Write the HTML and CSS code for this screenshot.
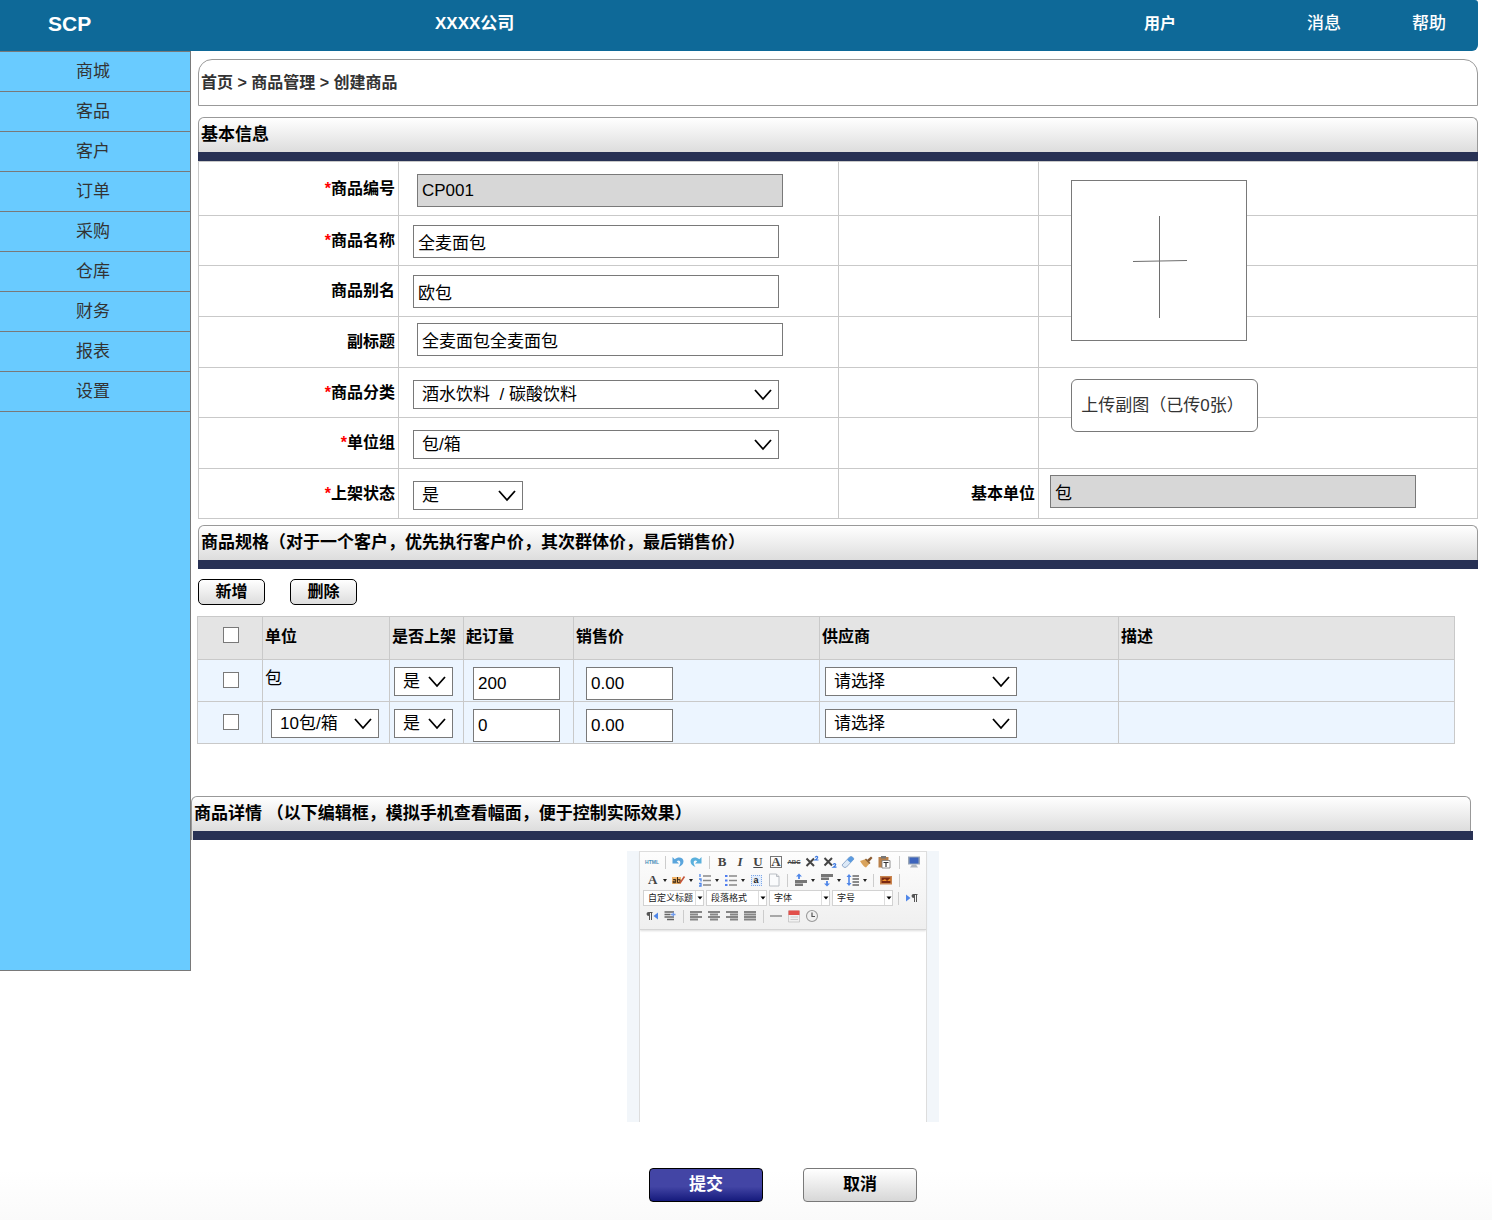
FILE: index.html
```html
<!DOCTYPE html>
<html lang="zh-CN">
<head>
<meta charset="utf-8">
<meta name="viewport" content="width=device-width, initial-scale=1">
<title>创建商品</title>
<link rel="stylesheet" href="styles.css">
</head>
<body>
<header class="topbar">
  <span class="brand">SCP</span>
  <span class="company">XXXX公司</span>
  <nav class="topnav">
    <a class="topnav-user" href="#">用户</a>
    <a class="topnav-messages" href="#">消息</a>
    <a href="#">帮助</a>
  </nav>
</header>

<div class="layout">
  <nav class="sidebar">
    <a href="#">商城</a>
    <a href="#">客品</a>
    <a href="#">客户</a>
    <a href="#">订单</a>
    <a href="#">采购</a>
    <a href="#">仓库</a>
    <a href="#">财务</a>
    <a href="#">报表</a>
    <a href="#">设置</a>
  </nav>

  <main class="content">
    <div class="breadcrumb">首页 &gt; 商品管理 &gt; 创建商品</div>

    <section class="panel">
      <h2 class="panel-title">基本信息</h2>
      <div class="basic">
        <table class="form-table">
          <colgroup><col class="col-label"><col class="col-field"><col class="col-label"><col></colgroup>
          <tbody>
            <tr>
              <th><label for="code"><i>*</i>商品编号</label></th>
              <td class="roomy indent"><input class="text" id="code" value="CP001" readonly></td>
              <th></th><td></td>
            </tr>
            <tr>
              <th><label for="name"><i>*</i>商品名称</label></th>
              <td><input class="text" id="name" value="全麦面包"></td>
              <th></th><td></td>
            </tr>
            <tr>
              <th><label for="alias">商品别名</label></th>
              <td><input class="text" id="alias" value="欧包"></td>
              <th></th><td></td>
            </tr>
            <tr>
              <th><label for="subtitle">副标题</label></th>
              <td class="snug indent"><input class="text" id="subtitle" value="全麦面包全麦面包"></td>
              <th></th><td></td>
            </tr>
            <tr>
              <th><label for="category"><i>*</i>商品分类</label></th>
              <td class="roomy"><select class="pick" id="category"><option>酒水饮料&nbsp; / 碳酸饮料</option></select></td>
              <th></th><td></td>
            </tr>
            <tr>
              <th><label for="unit-group"><i>*</i>单位组</label></th>
              <td class="roomy"><select class="pick" id="unit-group"><option>包/箱</option></select></td>
              <th></th><td></td>
            </tr>
            <tr>
              <th><label for="status"><i>*</i>上架状态</label></th>
              <td class="roomy"><select class="pick pick-short" id="status"><option>是</option></select></td>
              <th><label for="base-unit">基本单位</label></th>
              <td class="snug outdent"><input class="text" id="base-unit" value="包" readonly></td>
            </tr>
          </tbody>
        </table>
        <div class="uploads">
          <button class="photo" type="button" aria-label="上传主图">
            <svg width="54" height="102" viewBox="0 0 54 102"><path d="M26.500 0V102M0 45.500L54 44.500" stroke="#6e6e6e" fill="none"/></svg>
          </button>
          <button class="more-photos" type="button">上传副图（已传0张）</button>
        </div>
      </div>
    </section>

    <section class="panel specs">
      <h2 class="panel-title">商品规格（对于一个客户，优先执行客户价，其次群体价，最后销售价）</h2>
      <div class="actions">
        <button class="btn-small" type="button">新增</button>
        <button class="btn-small" type="button">删除</button>
      </div>
      <table class="spec-table">
        <colgroup><col class="w-check"><col class="w-unit"><col class="w-on"><col class="w-min"><col class="w-price"><col class="w-supplier"><col></colgroup>
        <thead>
          <tr>
            <th class="tick"><input type="checkbox" aria-label="全选"></th>
            <th>单位</th><th>是否上架</th><th>起订量</th><th>销售价</th><th>供应商</th><th>描述</th>
          </tr>
        </thead>
        <tbody>
          <tr>
            <td class="tick"><input type="checkbox" aria-label="选择包"></td>
            <td class="plain">包</td>
            <td class="on"><select class="pick" aria-label="是否上架"><option>是</option></select></td>
            <td class="min"><input class="text" aria-label="起订量" value="200"></td>
            <td class="price"><input class="text" aria-label="销售价" value="0.00"></td>
            <td class="supplier"><select class="pick" aria-label="供应商"><option>请选择</option></select></td>
            <td></td>
          </tr>
          <tr>
            <td class="tick"><input type="checkbox" aria-label="选择10包/箱"></td>
            <td class="unit"><select class="pick" aria-label="单位"><option>10包/箱</option></select></td>
            <td class="on"><select class="pick" aria-label="是否上架"><option>是</option></select></td>
            <td class="min"><input class="text" aria-label="起订量" value="0"></td>
            <td class="price"><input class="text" aria-label="销售价" value="0.00"></td>
            <td class="supplier"><select class="pick" aria-label="供应商"><option>请选择</option></select></td>
            <td></td>
          </tr>
        </tbody>
      </table>
    </section>

    <section class="details">
      <h2 class="panel-title">商品详情 （以下编辑框，模拟手机查看幅面，便于控制实际效果）</h2>
      <div class="centered">
        <div class="editor">
          <div class="editor-body">
            <div class="toolbar">
              <div class="tools">
                <button type="button" class="t-html">HTML</button><span class="sep"></span>
                <button type="button" aria-label="撤销"><svg viewBox="0 0 14 14"><path d="M1.500 2V8.500H8L5.700 6.200C7.500 4.800 9.300 5.500 9.300 7.500C9.300 9 8.500 10.500 7.500 12C10.500 11 12.500 9 12.500 6.300C12.500 2.500 7.500 1 3.700 4.200Z" fill="#5aa5dc"/></svg></button>
                <button type="button" aria-label="重做"><svg viewBox="0 0 14 14"><path d="M12.500 2V8.500H6L8.300 6.200C6.500 4.800 4.700 5.500 4.700 7.500C4.700 9 5.500 10.500 6.500 12C3.500 11 1.500 9 1.500 6.300C1.500 2.500 6.500 1 10.300 4.200Z" fill="#5ab0dc"/></svg></button><span class="sep"></span>
                <button type="button" class="t-serif">B</button>
                <button type="button" class="t-serif t-italic">I</button>
                <button type="button" class="t-serif t-under">U</button>
                <button type="button" class="t-serif"><span class="t-box">A</span></button>
                <button type="button" class="t-abc">ABC</button>
                <button type="button" aria-label="上标"><svg viewBox="0 0 14 14"><path d="M1.500 3.500L9 11M9 3.500L1.500 11" stroke="#444" stroke-width="2"/><path d="M10 2.500Q11.500 .5 12.700 2.200Q12.700 3.300 10.300 5H13.500" stroke="#3b78e0" stroke-width="1.200" fill="none"/></svg></button>
                <button type="button" aria-label="下标"><svg viewBox="0 0 14 14"><path d="M1.500 3L9 10.500M9 3L1.500 10.500" stroke="#444" stroke-width="2"/><path d="M10 9.700Q11.500 7.700 12.700 9.400Q12.700 10.500 10.300 12.200H13.500" stroke="#3b78e0" stroke-width="1.200" fill="none"/></svg></button>
                <button type="button" aria-label="清除格式"><svg viewBox="0 0 14 14"><path d="M1 10L8.500 2Q10 1 11.500 2L13 4L5.500 12Q4 13 2.500 12Z" fill="#dce9f7" stroke="#7d9bc0" stroke-width=".8"/><path d="M6 4.700L8.700 2Q10 1 11.500 2L13 4L9.500 7.700Z" fill="#5b9be0"/></svg></button>
                <button type="button" aria-label="格式刷"><svg viewBox="0 0 14 14"><path d="M8 5L12 1.500L13.500 3L10 7Z" fill="#8a5a30"/><path d="M1 6L7 4L11 8L7 12.500Q5 12.500 1 6Z" fill="#d9a35c"/><path d="M6.500 4L11 8.500" stroke="#8b6238" stroke-width="1.500"/></svg></button>
                <button type="button" aria-label="粘贴文本"><svg viewBox="0 0 14 14"><path d="M1.500 2H11.500V12.500H1.500Z" fill="#b9804a"/><path d="M4 1H9V3.500H4Z" fill="#777"/><path d="M5 5.500H13V13H5Z" fill="#fff" stroke="#777" stroke-width=".8"/><path d="M6.500 7.500H11.500M9 7.500V12" stroke="#333" stroke-width="1.200"/></svg></button><span class="sep sep-wide"></span>
                <button type="button" aria-label="全屏"><svg viewBox="0 0 14 14"><path d="M1 1.500H13V9.500H1Z" fill="#9aa7b8"/><path d="M2.500 2.500H11.500V8.500H2.500Z" fill="#3d64bd"/><path d="M5 9.500H9L11 12.500H3Z" fill="#b0b6bf"/></svg></button>
              </div>
              <div class="tools">
                <button type="button" class="t-drop t-serif" aria-label="字体颜色">A</button>
                <button type="button" class="t-drop" aria-label="背景色"><svg viewBox="0 0 14 14"><path d="M0 4H9V11H0Z" fill="#efb267"/><path d="M1.200 6.500H3.700V9.700H1.200V8.200H3.700M5.500 4V9.700H8V6.700H5.500" stroke="#3a2a18" fill="none"/><path d="M8 10L12.500 3.500" stroke="#c4553b" stroke-width="1.600"/></svg></button>
                <button type="button" class="t-drop" aria-label="编号列表"><svg viewBox="0 0 14 14"><path d="M2 1V4M1 6H3V8.500M1 10.500H3V13H1" stroke="#4f86e8" stroke-width="1.300" fill="none"/><path d="M5 3H13M5 7.500H13M5 12H13" stroke="#888" stroke-width="1.300"/></svg></button>
                <button type="button" class="t-drop" aria-label="项目列表"><svg viewBox="0 0 14 14"><path d="M1 3H3.500M1 7.500H3.500M1 12H3.500" stroke="#4f7df0" stroke-width="2"/><path d="M5 3H13M5 7.500H13M5 12H13" stroke="#888" stroke-width="1.300"/></svg></button>
                <button type="button" class="t-anchor"><span>a</span></button>
                <button type="button" aria-label="新建"><svg viewBox="0 0 14 14"><path d="M2.500 1H9.500L12 3.500V13H2.500Z" fill="#fafbfc" stroke="#b4b9c0" stroke-width=".9"/><path d="M9.500 1V3.500H12" fill="#ddd" stroke="#b4b9c0" stroke-width=".9"/></svg></button><span class="sep"></span>
                <button type="button" class="t-drop" aria-label="段前距"><svg viewBox="0 0 14 14"><path d="M1 7H13V10H1ZM1 10.500H9V13H1Z" fill="#777"/><path d="M5 .5L8 3.500H5.900V6H4.100V3.500H2Z" fill="#4f86e8"/></svg></button>
                <button type="button" class="t-drop" aria-label="段后距"><svg viewBox="0 0 14 14"><path d="M1 1H13V4H1ZM1 4.500H9V7H1Z" fill="#777"/><path d="M7 13.500L10 10.500H7.900V8H6.100V10.500H4Z" fill="#4f86e8"/></svg></button>
                <button type="button" class="t-drop" aria-label="行间距"><svg viewBox="0 0 14 14"><path d="M3 1L5.500 4H3.800V10H5.500L3 13L.5 10H2.200V4H.5Z" fill="#4f86e8"/><path d="M6.500 3H13M6.500 6H13M6.500 9H13M6.500 12H13" stroke="#666" stroke-width="1.300"/></svg></button><span class="sep"></span>
                <button type="button" aria-label="图片"><svg viewBox="0 0 14 14"><path d="M1 3H13V11.500H1Z" fill="#c98550"/><path d="M2.500 4.500H11.500V10H2.500Z" fill="#7c2a12"/><path d="M2.500 8L6 6L8 8L11.500 5V8H2.500Z" fill="#f0902a"/></svg></button><span class="sep"></span>
              </div>
              <div class="tools combos">
                <select aria-label="自定义标题"><option>自定义标题</option></select>
                <select aria-label="段落格式"><option>段落格式</option></select>
                <select aria-label="字体"><option>字体</option></select>
                <select aria-label="字号"><option>字号</option></select><span class="sep"></span>
                <button type="button" aria-label="从左向右"><svg viewBox="0 0 14 14"><path d="M1 3.500L5.500 7L1 10.500Z" fill="#4f86e8"/><path d="M12.500 3H8.500Q6.500 3 6.500 5Q6.500 7 9 7V11H10V4H11V11H12V4H12.500Z" fill="#555"/></svg></button>
              </div>
              <div class="tools">
                <button type="button" aria-label="从右向左"><svg viewBox="0 0 14 14"><path d="M13 3.500L8.500 7L13 10.500Z" fill="#4f86e8"/><path d="M7.500 3H3.500Q1.500 3 1.500 5Q1.500 7 4 7V11H5V4H6V11H7V4H7.500Z" fill="#555"/></svg></button>
                <button type="button" aria-label="首行缩进"><svg viewBox="0 0 14 14"><path d="M1.500 3H11M1.500 5.500H7.500M1.500 8H11M4 10.500H11" stroke="#666" stroke-width="1.600"/><path d="M8 5.500H12.500M10.300 3.500V7.500" stroke="#6f9cf0" stroke-width="1.300"/></svg></button><span class="sep"></span>
                <button type="button" aria-label="左对齐"><svg viewBox="0 0 14 14"><path d="M1 3H13M1 5.500H9M1 8H13M1 10.500H9" stroke="#858585" stroke-width="1.900"/></svg></button>
                <button type="button" aria-label="居中"><svg viewBox="0 0 14 14"><path d="M1 3H13M3 5.500H11M1 8H13M3 10.500H11" stroke="#858585" stroke-width="1.900"/></svg></button>
                <button type="button" aria-label="右对齐"><svg viewBox="0 0 14 14"><path d="M1 3H13M5 5.500H13M1 8H13M5 10.500H13" stroke="#858585" stroke-width="1.900"/></svg></button>
                <button type="button" aria-label="两端对齐"><svg viewBox="0 0 14 14"><path d="M1 3H13M1 5.500H13M1 8H13M1 10.500H13" stroke="#858585" stroke-width="2.100"/></svg></button><span class="sep"></span>
                <button type="button" aria-label="分隔线"><svg viewBox="0 0 14 14"><path d="M1 7H13" stroke="#777" stroke-width="1.200"/></svg></button>
                <button type="button" aria-label="日期"><svg viewBox="0 0 14 14"><path d="M1.500 2H12.500V13H1.500Z" fill="#f1f1f1" stroke="#bbb" stroke-width=".7"/><path d="M1.500 1.500H12.500V6H1.500Z" fill="#e2504b"/><path d="M3.500 8H11M3.500 10.500H11" stroke="#ccc"/></svg></button>
                <button type="button" aria-label="时间"><svg viewBox="0 0 14 14"><circle cx="7" cy="7" r="5.500" fill="#f0f0f0" stroke="#9a9a9a" stroke-width="1.100"/><path d="M7 3.500V7.500H10" stroke="#555" stroke-width="1.200" fill="none"/></svg></button>
              </div>
            </div>
          </div>
        </div>
        <div class="submit-row">
          <button class="btn btn-primary" type="submit">提交</button>
          <button class="btn" type="button">取消</button>
        </div>
      </div>
    </section>
  </main>
</div>
</body>
</html>
```
FILE: styles.css
```css
* { box-sizing: border-box; }

body {
  margin: 0;
  min-height: 100vh;
  background: linear-gradient(#fff, #fafafa) bottom / 100% 50px no-repeat #fff;
  color: #000;
  font: 17px/24px "Liberation Sans", "Noto Sans CJK SC", sans-serif;
}

a { color: inherit; text-decoration: none; }
button, input, select { font: inherit; color: inherit; margin: 0; padding: 0; }

/* Top bar */
.topbar {
  display: flex;
  align-items: center;
  height: 51px;
  margin-right: 14px;
  padding: 0 32px 4px 48px;
  border-radius: 0 3px 6px 0;
  background: #0e6998;
  color: #fff;
  font-weight: 500;
}
.brand { width: 387px; font-size: 21px; font-weight: 700; }
.company { font-weight: 700; }
.topnav { display: flex; align-items: center; margin-left: auto; }
.topnav-user { margin-right: 131px; font-size: 16px; font-weight: 700; }
.topnav-messages { margin-right: 71px; }

.layout { display: flex; align-items: flex-start; }

/* Side menu */
.sidebar {
  flex: none;
  width: 191px;
  min-height: 920px;
  border: 1px solid #797979;
  border-left: 0;
  background: #69cbff;
  color: #333;
}
.sidebar a {
  display: block;
  height: 40px;
  padding-right: 4px;
  border-bottom: 1px solid #797979;
  line-height: 39px;
  text-align: center;
}

.content { flex: 1; min-width: 0; padding-top: 8px; }

.breadcrumb {
  height: 47px;
  margin: 0 14px 11px 7px;
  padding: 0 2px;
  border: 1px solid #999;
  border-radius: 14px 14px 0 0;
  color: #333;
  font-size: 16px;
  font-weight: 700;
  line-height: 45px;
}

/* Titled panels */
.panel { margin: 0 14px 0 7px; }
.panel-title {
  height: 44px;
  margin: 0;
  padding: 0 2px;
  position: relative;
  border: 1px solid #999;
  border-bottom: 0;
  border-radius: 6px 6px 0 0;
  background: linear-gradient(#fff, #ddd 34px);
  font-size: 17px;
  font-weight: 700;
  line-height: 34px;
}
.panel-title::after {
  content: "";
  position: absolute;
  inset: 34px -1px 0;
  background: #283154;
}
.details .panel-title::after { left: 1px; right: -3px; }

/* Basic information */
.basic { position: relative; }
table { width: 100%; border-collapse: collapse; table-layout: fixed; }
th, td { padding: 0; border: 1px solid #c9c9c9; vertical-align: top; }
.col-label { width: 200px; }
.col-field { width: 440px; }
.form-table tr { height: 50px; }
.form-table tr:nth-child(3n), .form-table tr:nth-child(4) { height: 51px; }
.form-table tr:first-child { height: 54px; }
.form-table th {
  padding-right: 3px;
  font-size: 16px;
  text-align: right;
  vertical-align: middle;
}
.form-table th i { color: #f00; font-style: normal; }
.form-table td { padding: 9px 0 0 14px; }
.form-table td.roomy { padding-top: 12px; }
.form-table td.snug { padding-top: 6px; }
.form-table td.indent { padding-left: 18px; }
.form-table td.outdent { padding-left: 11px; }

.text, .pick {
  display: block;
  width: 366px;
  border: 1px solid #797979;
  border-radius: 0;
  background: #fff;
}
.text { height: 33px; padding: 0 4px; }
.text:read-only { background: #d7d7d7; }
.pick {
  height: 29px;
  padding: 0 8px;
  appearance: none;
  background: #fff url("data:image/svg+xml,%3Csvg xmlns='http://www.w3.org/2000/svg' width='18' height='12'%3E%3Cpath d='M1 1L9 10L17 1' fill='none' stroke='%23000' stroke-width='1.800'/%3E%3C/svg%3E") right 6px center no-repeat;
}
.pick-short { width: 110px; }

.uploads {
  position: absolute;
  top: 19px;
  left: 873px;
  display: flex;
  flex-direction: column;
  align-items: flex-start;
  gap: 38px;
}
.photo {
  display: grid;
  place-items: center;
  width: 176px;
  height: 161px;
  padding: 13px 0 0 1px;
  border: 1px solid #797979;
  background: #fff;
}
.more-photos {
  width: 187px;
  height: 53px;
  padding-right: 4px;
  border: 1px solid #797979;
  border-radius: 6px;
  background: #fff;
  color: #333;
}

/* Specifications */
.specs { margin-top: 6px; }
.actions { display: flex; gap: 25px; padding: 10px 0 11px; }
.btn-small {
  width: 67px;
  height: 26px;
  border: 1px solid #000;
  border-radius: 5px;
  background: linear-gradient(#fff, #ddd);
  font-size: 16px;
  font-weight: 700;
  line-height: 24px;
}
.spec-table { width: calc(100% - 22px); margin-left: -1px; }
.w-check { width: 65px; }
.w-unit { width: 127px; }
.w-on { width: 74px; }
.w-min { width: 110px; }
.w-price { width: 246px; }
.w-supplier { width: 299px; }
.spec-table tr { height: 42px; background: #ecf5ff; }
.spec-table thead tr { height: 43px; background: #e4e4e4; }
.spec-table th { padding: 8px 0 0 2px; font-size: 16px; text-align: left; white-space: nowrap; }
.spec-table td { padding-top: 7px; }
.spec-table .tick { padding: 10px 0 0 25px; line-height: 16px; }
.spec-table td.tick { padding-top: 12px; }
.tick input {
  display: block;
  width: 16px;
  height: 16px;
  appearance: none;
  border: 1px solid #797979;
  background: #fff;
}
.tick input:checked { background: #283154; }
.spec-table td.plain { padding-left: 2px; }
.spec-table td.unit { padding-left: 8px; }
.spec-table td.on { padding-left: 4px; }
.spec-table td.min { padding-left: 9px; }
.spec-table td.price { padding-left: 12px; }
.spec-table td.supplier { padding-left: 5px; }
.unit .pick { width: 108px; }
.on .pick { width: 59px; }
.min .text, .price .text { width: 87px; }
.supplier .pick { width: 192px; }

/* Details editor */
.details { margin: 52px 21px 0 0; }
.centered {
  display: flex;
  flex-direction: column;
  align-items: center;
  padding: 11px 96px 17px 0;
}
.editor { width: 312px; padding: 0 12px; background: #f2f6fa; }
.editor-body { height: 271px; border: solid #ddd; border-width: 1px 1px 0; background: #fff; }
.toolbar {
  padding: 1px 0 4px 3px;
  border-bottom: 1px solid #d4d4d4;
  background: linear-gradient(#fdfdfd, #efefef);
  box-shadow: 0 1px 2px #ddd;
}
.tools { display: flex; align-items: center; height: 18px; }
.tools button {
  display: flex;
  align-items: center;
  justify-content: center;
  flex: none;
  width: 18px;
  height: 18px;
  border: 0;
  background: none;
  color: #444;
}
.tools svg { display: block; flex: none; width: 14px; height: 14px; }
.sep { flex: none; width: 8px; height: 13px; background: linear-gradient(#ccc, #ccc) center / 1px 100% no-repeat; }
.sep-wide { width: 12px; }
.tools .t-drop { width: 26px; justify-content: flex-start; padding-left: 3px; }
.t-drop::after {
  content: "";
  margin-left: auto;
  margin-right: 2px;
  border: 2px solid transparent;
  border-top: 3px solid #222;
  border-bottom: 0;
}
.tools .t-html { color: #4a8fb8; font-size: 5px; font-weight: 700; }
.tools .t-serif { font: 700 13px/14px "Liberation Serif", serif; }
.tools .t-drop.t-serif { padding-left: 5px; }
.tools .t-italic { font-style: italic; }
.tools .t-under { text-decoration: underline; }
.t-box { width: 12px; border: 1px solid #777; line-height: 10px; }
.tools .t-abc { font-size: 6px; font-weight: 700; text-decoration: line-through; }
.t-anchor span {
  width: 11px;
  border: 1px dotted #7fa8e8;
  background: #e4eefc;
  color: #222;
  font: 700 9px/9px "Liberation Sans", sans-serif;
}
.combos { gap: 2px; }
.combos .sep { width: 6px; }
.combos select {
  width: 61px;
  height: 16px;
  padding: 0 10px 0 4px;
  appearance: none;
  border: 1px solid #d2d2d2;
  border-radius: 0;
  background: #fff url("data:image/svg+xml,%3Csvg xmlns='http://www.w3.org/2000/svg' width='8' height='16'%3E%3Cpath d='M.5 0V16' stroke='%23ddd'/%3E%3Cpath d='M2.500 6.500H7.500L5 9.500Z' fill='%23000'/%3E%3C/svg%3E") right center no-repeat;
  color: #222;
  font-size: 9px;
  line-height: 14px;
}

.submit-row { display: flex; gap: 40px; margin-top: 46px; }
.btn {
  width: 114px;
  height: 34px;
  border: 1px solid #797979;
  border-radius: 4px;
  background: linear-gradient(#fff, #d7d7d7);
  font-weight: 700;
}
.btn-primary {
  border-color: #000;
  background: linear-gradient(#4345a5 55%, #151a7c);
  color: #fff;
}
```
